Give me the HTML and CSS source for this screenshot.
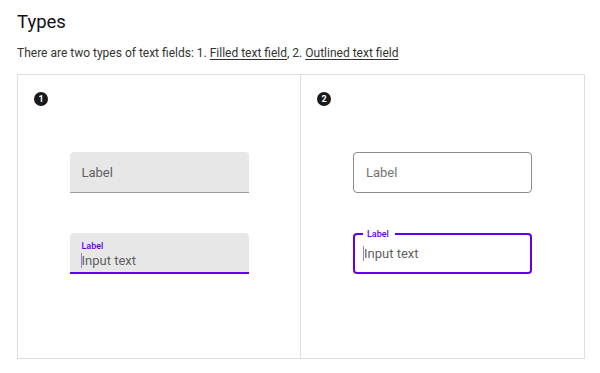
FILE: index.html
```html
<!DOCTYPE html>
<html lang="en">
<head>
  <meta charset="UTF-8" />
  <meta name="viewport" content="width=device-width, initial-scale=1.0"/>
  <title>Text fields - Types</title>
  <link rel="stylesheet" href="styles.css">
</head>
<body>

  <h1 class="title">Types</h1>
  <p class="intro">There are two types of text fields: 1. <a href="#filled">Filled text field</a>, 2. <a href="#outlined">Outlined text field</a></p>

  <div class="types">
    <div class="type" id="filled">
      <span class="badge">1</span>
      <div class="fields">
        <div class="field filled">
          <span class="placeholder">Label</span>
        </div>
        <div class="field filled focused">
          <span class="float-label">Label</span>
          <span class="value"><span class="caret"></span>Input text</span>
        </div>
      </div>
    </div>

    <div class="type" id="outlined">
      <span class="badge">2</span>
      <div class="fields">
        <div class="field outlined">
          <span class="placeholder">Label</span>
        </div>
        <div class="field outlined focused">
          <span class="notch-label">Label</span>
          <span class="value"><span class="caret"></span>Input text</span>
        </div>
      </div>
    </div>
  </div>

</body>
</html>
```

FILE: styles.css
```css
:root {
  --text: #222;
  --muted: #5f5f5f;
  --primary: #6200ee;
  --fill: #e7e7e7;
  --line: #dedede;
}

* {
  box-sizing: border-box;
}

body {
  margin: 0;
  padding: 0 16px 0 17px;
  font-family: Roboto, 'Noto Sans', sans-serif;
  color: var(--text);
  background: #fff;
}

.title {
  margin: 11px 0 0;
  font-size: 18.5px;
  line-height: 22px;
  font-weight: 400;
  color: #111;
}

.intro {
  margin: 13px 0 0;
  font-size: 12px;
  line-height: 15px;
  color: #333;
}

.intro a {
  color: #333;
  text-decoration: underline;
  text-underline-offset: 2px;
}

.types {
  display: grid;
  grid-template-columns: 282px 1fr;
  margin-top: 13px;
  width: 568px;
  height: 285px;
  border: 1px solid var(--line);
}

.type {
  display: flex;
  flex-direction: column;
  align-items: center;
  padding: 17px 16px;
}

.type + .type {
  border-left: 1px solid var(--line);
}

.badge {
  align-self: flex-start;
  width: 14px;
  height: 14px;
  border-radius: 50%;
  background: #1a1a1a;
  color: #fff;
  font-size: 9px;
  font-weight: 700;
  line-height: 14px;
  text-align: center;
}

.fields {
  display: flex;
  flex-direction: column;
  gap: 40px;
  margin-top: 46px;
}

.field {
  position: relative;
  width: 179px;
  height: 41px;
  font-size: 13px;
  display: flex;
  flex-direction: column;
  justify-content: center;
  padding: 0 12px;
}

.filled {
  background: var(--fill);
  border-radius: 4px 4px 0 0;
  border-bottom: 1px solid #9a9a9a;
}

.filled.focused {
  border-bottom: 2px solid var(--primary);
  padding-top: 4px;
}

.outlined {
  border: 1px solid #8c8c8c;
  border-radius: 4px;
}

.outlined.focused {
  border: 2px solid var(--primary);
  padding: 0 9px;
}

.placeholder {
  color: var(--muted);
}

.outlined .placeholder {
  color: #747474;
}

.float-label {
  font-size: 9px;
  font-weight: 500;
  line-height: 11px;
  color: var(--primary);
  margin-bottom: 1px;
}

.notch-label {
  position: absolute;
  top: -7px;
  left: 8px;
  padding: 0 6px 0 4px;
  background: #fff;
  font-size: 9px;
  font-weight: 500;
  line-height: 12px;
  color: var(--primary);
}

.value {
  display: flex;
  align-items: center;
  color: var(--muted);
  line-height: 16px;
}

.caret {
  width: 1px;
  height: 15px;
  margin-left: -1px;
  background: #9b7cf0;
}
```
